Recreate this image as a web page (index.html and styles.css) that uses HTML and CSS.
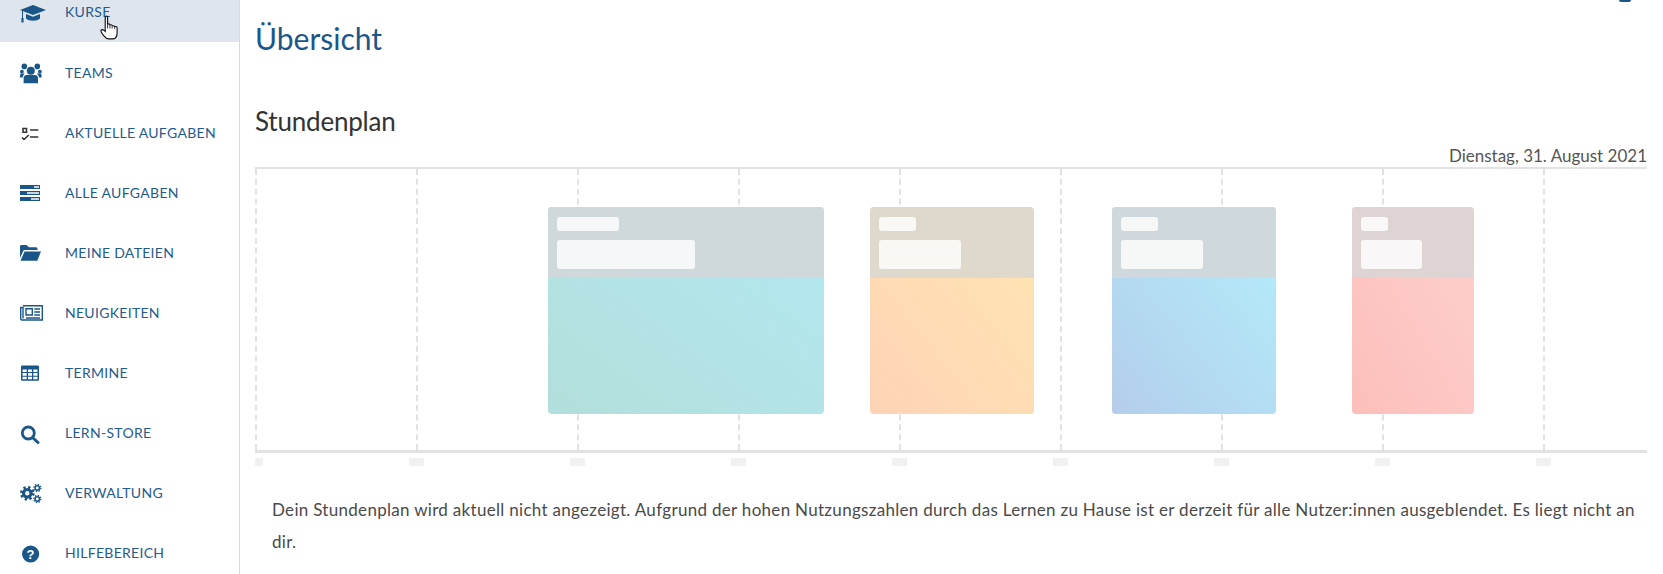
FILE: index.html
```html
<!DOCTYPE html>
<html lang="de">
<head>
  <meta charset="UTF-8" />
  <meta name="viewport" content="width=device-width, initial-scale=1.0"/>
  <title>Übersicht</title>
  <link rel="stylesheet" href="styles.css">
</head>
<body>

  <div class="page">
    <nav class="sidebar">
      <a class="nav-item active" href="#">
        <svg class="nav-icon hat-icon" viewBox="0 0 26 18"><path d="M13 0 L26 5 L13 10 L0 5 Z"/><path d="M6 9 L13 11.7 L20 9 V13.5 C17 16.5 9 16.5 6 13.5 Z"/><path d="M2 6 H3 V13 H3.6 V17.5 H1.4 V13 H2 Z"/></svg>
        <span>KURSE</span>
        <svg class="hand-cursor" viewBox="0 0 20 26"><path d="M5.5 2.2 C5.5 .6 8 .6 8 2.2 V10 C8 8.8 10.4 8.8 10.4 10.4 V11 C10.4 9.8 12.8 9.8 12.8 11.4 V12 C12.8 10.8 15.4 10.8 15.4 12.6 V12.8 C15.4 11.6 18 11.6 18 13.4 V19 C18 22 16.4 25 14 25 H9 C6 25 1 18.5 1 16.5 C1 15 3 14.6 5.5 17 Z"/><path class="hand-line" d="M8 10 V14 M10.4 11 V14 M12.8 12 V14 M15.4 12.8 V14.5"/></svg>
      </a>
      <a class="nav-item" href="#">
        <svg class="nav-icon" viewBox="0 0 24 22"><circle cx="10.8" cy="8.7" r="4"/><circle cx="4.3" cy="4.4" r="2.8"/><circle cx="17.3" cy="4.4" r="2.8"/><circle cx="1.9" cy="9.7" r="1.9"/><circle cx="19.9" cy="9.7" r="1.9"/><path d="M3.6 21.3 V16 C3.6 14 5 13 7 13 H14.6 C16.6 13 18 14 18 16 V21.3 Z"/><path d="M0 15.4 V13.5 C0 12 1 11.6 2 11.6 H4.6 L3 14 L2.6 15.4 Z M21.6 15.4 V13.5 C21.6 12 20.6 11.6 19.6 11.6 H17 L18.6 14 L19 15.4 Z"/></svg>
        <span>TEAMS</span>
      </a>
      <a class="nav-item" href="#">
        <svg class="nav-icon" viewBox="0 0 24 22"><path class="task-icon" d="M3 6.5 H6.5 V10.3 H3 Z M10 8 H18.3 M10 15 H18.3 M2 15.5 L4 17.5 L8.8 13"/></svg>
        <span>AKTUELLE AUFGABEN</span>
      </a>
      <a class="nav-item" href="#">
        <svg class="nav-icon" viewBox="0 0 24 22"><path fill-rule="evenodd" d="M0 3 H20 V7 H0 Z M14 4.3 V5.7 H19 V4.3 Z M0 9 H20 V13 H0 Z M7 10.3 V11.7 H19 V10.3 Z M0 15 H20 V19 H0 Z M11 16.3 V17.7 H19 V16.3 Z"/></svg>
        <span>ALLE AUFGABEN</span>
      </a>
      <a class="nav-item" href="#">
        <svg class="nav-icon" viewBox="0 0 24 22"><path d="M0 4.5 C0 3.5 .7 3 1.5 3 H6.5 L9 5.2 H16 C17 5.2 17.5 6 17.5 7 V8 H5 C4 8 3.4 8.6 3 9.4 L0 16 Z"/><path d="M4.5 9.5 H21 L17.3 18.7 H0.5 Z"/></svg>
        <span>MEINE DATEIEN</span>
      </a>
      <a class="nav-item" href="#">
        <svg class="nav-icon" viewBox="0 0 24 22"><path class="news-icon" d="M3 3.7 H22.3 V18 H2 C1 18 .7 17.2 .7 16.4 V5.5 H3 V16.4 M6 6.7 H12.3 V13 H6 Z M14.3 7 H20 M14.3 10 H20 M14.3 13 H20 M6 16 H20"/></svg>
        <span>NEUIGKEITEN</span>
      </a>
      <a class="nav-item" href="#">
        <svg class="nav-icon" viewBox="0 0 24 22"><path fill-rule="evenodd" d="M2.5 3.5 H17.5 C18.5 3.5 19 4 19 5 V17.2 C19 18.2 18.5 18.7 17.5 18.7 H2.5 C1.5 18.7 1 18.2 1 17.2 V5 C1 4 1.5 3.5 2.5 3.5 Z M2.5 7.5 V10 H6.7 V7.5 Z M8 7.5 V10 H12 V7.5 Z M13.3 7.5 V10 H17.5 V7.5 Z M2.5 11 V13.8 H6.7 V11 Z M8 11 V13.8 H12 V11 Z M13.3 11 V13.8 H17.5 V11 Z M2.5 14.8 V17.3 H6.7 V14.8 Z M8 14.8 V17.3 H12 V14.8 Z M13.3 14.8 V17.3 H17.5 V14.8 Z"/></svg>
        <span>TERMINE</span>
      </a>
      <a class="nav-item" href="#">
        <svg class="nav-icon" viewBox="0 0 24 22"><circle class="search-ring" cx="8.3" cy="11" r="6"/><path class="search-line" d="M13 16 L18 20.5"/></svg>
        <span>LERN-STORE</span>
      </a>
      <a class="nav-item" href="#">
        <svg class="nav-icon" viewBox="0 0 24 22">
          <circle class="gear-ring" cx="7.3" cy="11.3" r="3.8"/><circle class="gear-teeth" cx="7.3" cy="11.3" r="6"/>
          <circle class="gear-ring-small" cx="17.3" cy="6" r="2.2"/><circle class="gear-teeth-small" cx="17.3" cy="6" r="3.5"/>
          <circle class="gear-ring-small" cx="17.3" cy="17" r="2.2"/><circle class="gear-teeth-small" cx="17.3" cy="17" r="3.5"/>
        </svg>
        <span>VERWALTUNG</span>
      </a>
      <a class="nav-item" href="#">
        <svg class="nav-icon" viewBox="0 0 24 22"><circle cx="10.6" cy="12" r="8.6"/><text class="help-mark" x="10.6" y="16.6" text-anchor="middle">?</text></svg>
        <span>HILFEBEREICH</span>
      </a>
    </nav>

    <main class="content">
      <span class="corner-arc"></span>
      <h1>Übersicht</h1>
      <h2>Stundenplan</h2>
      <div class="date">Dienstag, 31. August 2021</div>

      <div class="timetable">
        <div class="grid">
          <div class="grid-col"></div>
          <div class="grid-col"></div>
          <div class="grid-col"></div>
          <div class="grid-col"></div>
          <div class="grid-col"></div>
          <div class="grid-col"></div>
          <div class="grid-col"></div>
          <div class="grid-col"></div>
          <div class="grid-col"></div>
        </div>

        <div class="lesson lesson-teal">
          <div class="lesson-head"><div class="pill-small"></div><div class="pill-big"></div></div>
        </div>
        <div class="lesson lesson-orange">
          <div class="lesson-head"><div class="pill-small"></div><div class="pill-big"></div></div>
        </div>
        <div class="lesson lesson-blue">
          <div class="lesson-head"><div class="pill-small"></div><div class="pill-big"></div></div>
        </div>
        <div class="lesson lesson-red">
          <div class="lesson-head"><div class="pill-small"></div><div class="pill-big"></div></div>
        </div>
      </div>

      <div class="ticks">
        <span class="tick tick-first"></span>
        <span class="tick"></span>
        <span class="tick"></span>
        <span class="tick"></span>
        <span class="tick"></span>
        <span class="tick"></span>
        <span class="tick"></span>
        <span class="tick"></span>
        <span class="tick"></span>
      </div>

      <p class="notice">Dein Stundenplan wird aktuell nicht angezeigt. Aufgrund der hohen Nutzungszahlen durch das Lernen zu Hause ist er derzeit für alle Nutzer:innen ausgeblendet. Es liegt nicht an dir.</p>
    </main>
  </div>

</body>
</html>
```

FILE: styles.css
```css
html, body {
  margin: 0;
  height: 574px;
  overflow: hidden;
}

body {
  font-family: "Lato", "Noto Sans", sans-serif;
  background-color: white;
  color: #4a4a4a;
}

.page {
  display: flex;
  height: 574px;
}

/* sidebar */
.sidebar {
  width: 239px;
  flex-shrink: 0;
  border-right: 1px solid #d9d9d9;
}

.nav-item {
  display: flex;
  align-items: center;
  height: 60px;
  padding-left: 20px;
  color: #1f5b8c;
  text-decoration: none;
  font-size: 14px;
  letter-spacing: 0.3px;
  position: relative;
}

.nav-item.active {
  height: 42px;
  align-items: flex-start;
  background-color: #dee5ec;
}

.nav-item.active span {
  line-height: 24px;
}

.nav-icon {
  width: 24px;
  height: 22px;
  margin-top: 2px;
  margin-right: 21px;
  flex-shrink: 0;
  fill: #1a5788;
}

.nav-item.active .hat-icon {
  width: 26px;
  height: 18px;
  margin-top: 5px;
  margin-right: 19px;
}

.hand-cursor {
  position: absolute;
  left: 100px;
  top: 15px;
  width: 19px;
  height: 25px;
  fill: white;
  stroke: #111;
  stroke-width: 1.2;
}

.hand-line {
  fill: none;
  stroke-width: 0.9;
}

.task-icon {
  fill: none;
  stroke: #333;
  stroke-width: 1.6;
}

.news-icon {
  fill: none;
  stroke: #1a5788;
  stroke-width: 1.4;
}

.search-ring {
  fill: none;
  stroke: #1a5788;
  stroke-width: 2.8;
}

.search-line {
  fill: none;
  stroke: #1a5788;
  stroke-width: 3;
  stroke-linecap: round;
}

.gear-ring {
  fill: none;
  stroke: #1a5788;
  stroke-width: 3.2;
}

.gear-teeth {
  fill: none;
  stroke: #1a5788;
  stroke-width: 2.6;
  stroke-dasharray: 2.36;
}

.gear-ring-small {
  fill: none;
  stroke: #1a5788;
  stroke-width: 1.6;
}

.gear-teeth-small {
  fill: none;
  stroke: #1a5788;
  stroke-width: 1.3;
  stroke-dasharray: 1.37;
}

.help-mark {
  fill: white;
  font-family: "Liberation Sans", sans-serif;
  font-weight: bold;
  font-size: 13px;
}

/* main */
.content {
  flex: 1;
  padding: 0 16px 0 15px;
  position: relative;
  min-width: 0;
}

/* bottom edge of the avatar, scrolled out of view */
.corner-arc {
  position: absolute;
  left: 1379px;
  top: 0;
  width: 12px;
  height: 2px;
  background-color: #1a5788;
  border-radius: 0 0 6px 6px;
}

h1 {
  margin: 18px 0 0 0;
  font-size: 30px;
  line-height: 40px;
  font-weight: 400;
  color: #1a5788;
}

h2 {
  margin: 47px 0 0 0;
  font-size: 26px;
  letter-spacing: -0.2px;
  line-height: 32px;
  font-weight: 400;
  color: #333;
}

.date {
  text-align: right;
  font-size: 17px;
  line-height: 20px;
  margin: 9px 0 1px;
  color: #555;
}

.timetable {
  position: relative;
  height: 281px;
  border-top: 2px solid #e2e2e2;
  border-bottom: 3px solid #e2e2e2;
}

.grid {
  display: flex;
  height: 100%;
}

.grid-col {
  width: 161px;
  flex-shrink: 0;
  box-sizing: border-box;
  border-left: 2px dashed #e2e2e2;
}

.lesson {
  position: absolute;
  top: 38px;
  height: 207px;
  border-radius: 4px;
  overflow: hidden;
}

.lesson-head {
  height: 71px;
  box-sizing: border-box;
  padding-top: 10px;
}

.pill-small,
.pill-big {
  margin-left: 9px;
  background-color: rgba(255,255,255,0.8);
  border-radius: 3px;
}

.pill-small {
  width: 22.5%;
  height: 14px;
  margin-bottom: 9px;
}

.pill-big {
  width: 50%;
  height: 29px;
}

/* start and length of a lesson are the time axis */
.lesson-teal {
  left: 292.5px;
  width: 276.5px;
  background: linear-gradient(to top right, #b2dfdb, #b3e8f2);
}

.lesson-teal .lesson-head { background-color: #cfd8da; }

.lesson-orange {
  left: 614.5px;
  width: 164.5px;
  background: linear-gradient(to top right, #ffd3b6, #ffe6b2);
}

.lesson-orange .lesson-head { background-color: #dfd9cd; }

.lesson-blue {
  left: 856.5px;
  width: 164.5px;
  background: linear-gradient(to top right, #b4cdeb, #b3effb);
}

.lesson-blue .lesson-head { background-color: #cfd9dd; }

.lesson-red {
  left: 1096.5px;
  width: 122.5px;
  background: linear-gradient(to top right, #fcbfba, #fdd0cf);
}

.lesson-red .lesson-head { background-color: #ded4d4; }

.ticks {
  display: flex;
  height: 8px;
  margin-top: 5px;
}

.tick {
  width: 161px;
  flex-shrink: 0;
}

.tick::before {
  content: '';
  display: block;
  width: 15.5px;
  height: 8px;
  margin-left: -7.5px;
  background-color: #f1f1f1;
}

.tick-first::before {
  width: 8px;
  margin-left: 0;
}

.notice {
  margin: 28px 0 0 0;
  padding: 0 0 0 17px;
  font-size: 17px;
  letter-spacing: 0.3px;
  line-height: 32px;
  color: #4a4a4a;
}
```
